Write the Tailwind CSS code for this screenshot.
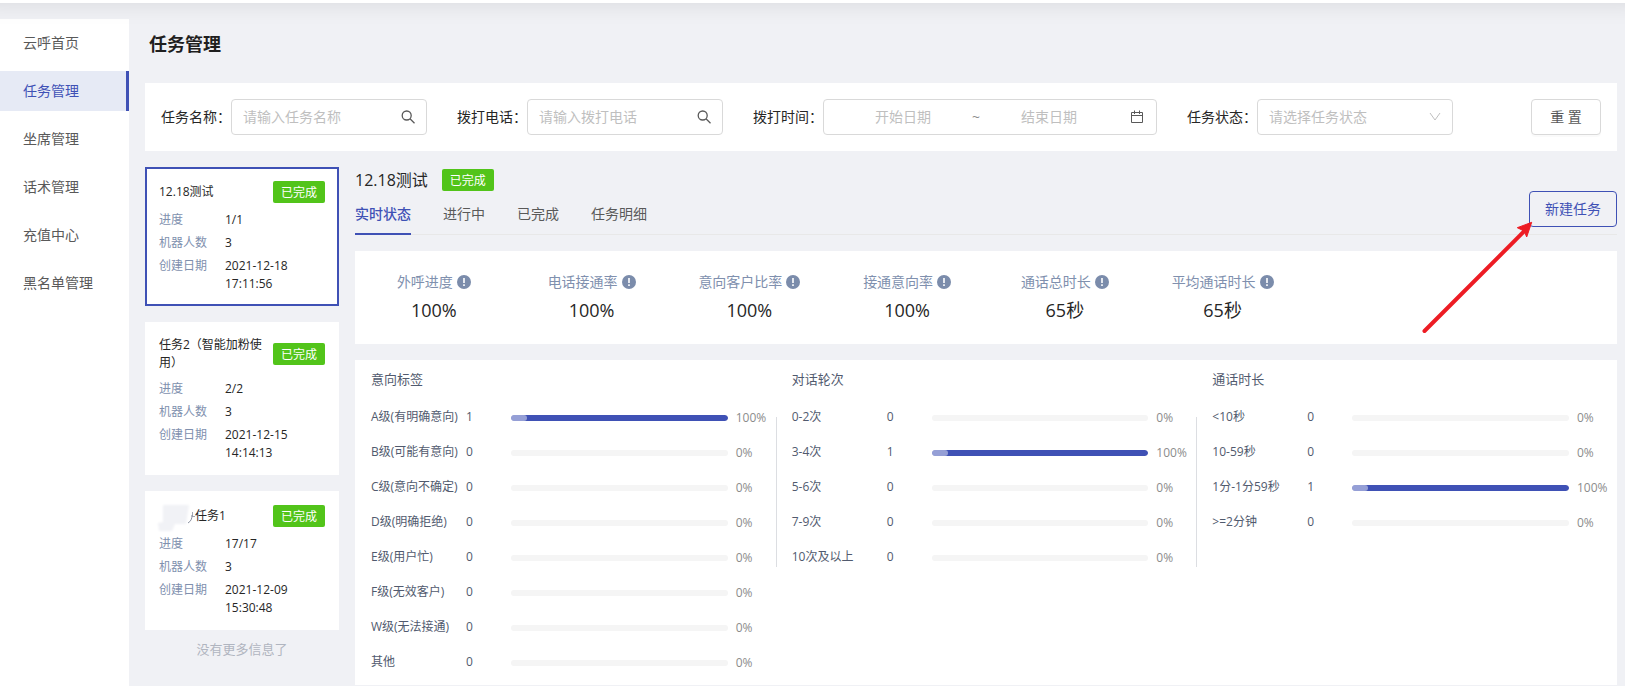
<!DOCTYPE html>
<html lang="zh-CN">
<head>
    <meta charset="UTF-8">
    <meta name="viewport" content="width=device-width, initial-scale=1.0">
    <title>任务管理</title>
    <script src="https://cdn.jsdelivr.net/npm/@tailwindcss/browser@4"></script>
</head>
<body class="min-h-screen flex flex-col bg-[#f0f1f5] font-['Open_Sans','Noto_Sans_CJK_SC',sans-serif] text-sm text-[#262626]">
    <header class="relative z-10 h-[3px] shrink-0 bg-white shadow-[0_-20px_24px_20px_rgba(0,0,0,0.11)]"></header>

    <div class="flex flex-1">
        <!-- Sidebar -->
        <nav class="mt-4 w-[129px] shrink-0 bg-white pt-1 text-[#595959]">
            <a href="#" class="mb-2 flex h-10 items-center pl-[23px]">云呼首页</a>
            <a href="#" class="mb-2 flex h-10 items-center border-r-3 border-[#3f51b5] bg-[#e6eaf5] pl-[23px] text-[#3f51b5]">任务管理</a>
            <a href="#" class="mb-2 flex h-10 items-center pl-[23px]">坐席管理</a>
            <a href="#" class="mb-2 flex h-10 items-center pl-[23px]">话术管理</a>
            <a href="#" class="mb-2 flex h-10 items-center pl-[23px]">充值中心</a>
            <a href="#" class="mb-2 flex h-10 items-center pl-[23px]">黑名单管理</a>
        </nav>

        <main class="min-w-0 flex-1 pl-4 pr-2">
            <h1 class="mt-[27px] mb-[25px] pl-1 text-lg leading-7 font-bold text-[#1f1f1f]">任务管理</h1>

            <!-- Filters -->
            <form class="mb-4 flex items-center gap-[30px] bg-white p-4">
                <div class="flex items-center">
                    <label for="taskName" class="w-[70px] whitespace-nowrap">任务名称：</label>
                    <div class="flex h-9 w-[196px] items-center rounded border border-[#d9d9d9] pr-[10px] pl-[11px]">
                        <input id="taskName" type="text" placeholder="请输入任务名称" class="min-w-0 flex-1 outline-none placeholder:text-[#bfbfbf]">
                        <svg class="size-4 text-[#595959]" viewBox="0 0 16 16" fill="none" stroke="currentColor" stroke-width="1.3"><circle cx="6.7" cy="6.5" r="4.5"/><path d="M10 9.8l4.5 4.5"/></svg>
                    </div>
                </div>
                <div class="flex items-center">
                    <label for="phone" class="w-[70px] whitespace-nowrap">拨打电话：</label>
                    <div class="flex h-9 w-[196px] items-center rounded border border-[#d9d9d9] pr-[10px] pl-[11px]">
                        <input id="phone" type="text" placeholder="请输入拨打电话" class="min-w-0 flex-1 outline-none placeholder:text-[#bfbfbf]">
                        <svg class="size-4 text-[#595959]" viewBox="0 0 16 16" fill="none" stroke="currentColor" stroke-width="1.3"><circle cx="6.7" cy="6.5" r="4.5"/><path d="M10 9.8l4.5 4.5"/></svg>
                    </div>
                </div>
                <div class="flex items-center">
                    <label for="startDate" class="w-[70px] whitespace-nowrap">拨打时间：</label>
                    <div class="flex h-9 w-[334px] items-center rounded border border-[#d9d9d9] pl-[10px] pr-3">
                        <input id="startDate" type="text" placeholder="开始日期" class="w-[138px] text-center outline-none placeholder:text-[#bfbfbf]">
                        <span class="w-2 text-center text-[#8c8c8c]">~</span>
                        <input id="endDate" type="text" placeholder="结束日期" aria-label="结束日期" class="w-[138px] text-center outline-none placeholder:text-[#bfbfbf]">
                        <svg class="ml-auto size-[14px] text-[#595959]" viewBox="0 0 14 14" fill="none" stroke="currentColor"><path d="M1.5 2.5h11v10h-11zM1.5 5.5h11M4.5 0.5v3.5M9.5 0.5v3.5"/></svg>
                    </div>
                </div>
                <div class="flex items-center">
                    <label for="status" class="w-[70px] whitespace-nowrap">任务状态：</label>
                    <div class="relative">
                        <select id="status" class="block h-9 w-[196px] appearance-none rounded border border-[#d9d9d9] px-[11px] text-[#bfbfbf] outline-none">
                            <option>请选择任务状态</option>
                            <option>进行中</option>
                            <option>已完成</option>
                        </select>
                        <svg class="pointer-events-none absolute top-3 right-3 size-3 text-[#bfbfbf]" viewBox="0 0 12 12" fill="none" stroke="currentColor"><path d="M1 2l5 7 5-7"/></svg>
                    </div>
                </div>
                <button type="reset" class="ml-auto h-9 w-[70px] rounded border border-[#d9d9d9] bg-white text-[#595959] shadow-[0_2px_0_rgba(0,0,0,0.02)]">重 置</button>
            </form>

            <div class="flex items-start gap-4">
                <!-- Task list -->
                <section class="w-[194px] shrink-0 text-xs leading-[18px]">
                    <article class="mb-4 border-2 border-[#3f51b5] bg-white px-3 pt-3 pb-[11px]">
                        <div class="mb-2 flex items-center justify-between">
                            <h2>12.18测试</h2>
                            <span class="h-[22px] w-[52px] shrink-0 rounded-xs bg-[#52c41a] text-center leading-[23px] text-white">已完成</span>
                        </div>
                        <dl class="grid grid-cols-[66px_1fr] gap-y-[5px]">
                            <dt class="text-[#8090ae]">进度</dt><dd>1/1</dd>
                            <dt class="text-[#8090ae]">机器人数</dt><dd>3</dd>
                            <dt class="text-[#8090ae]">创建日期</dt><dd>2021-12-18<br>17:11:56</dd>
                        </dl>
                    </article>

                    <article class="mb-4 border-2 border-white bg-white px-3 pt-3 pb-[11px]">
                        <div class="mb-2 flex items-center justify-between">
                            <h2 class="w-[104px]">任务2（智能加粉使用）</h2>
                            <span class="h-[22px] w-[52px] shrink-0 rounded-xs bg-[#52c41a] text-center leading-[23px] text-white">已完成</span>
                        </div>
                        <dl class="grid grid-cols-[66px_1fr] gap-y-[5px]">
                            <dt class="text-[#8090ae]">进度</dt><dd>2/2</dd>
                            <dt class="text-[#8090ae]">机器人数</dt><dd>3</dd>
                            <dt class="text-[#8090ae]">创建日期</dt><dd>2021-12-15<br>14:14:13</dd>
                        </dl>
                    </article>

                    <article class="border-2 border-white bg-white px-3 pt-3 pb-[11px]">
                        <div class="mb-2 flex items-center justify-between">
                            <h2 class="flex items-center">
                                <!-- masked part of the name -->
                                <svg class="h-[22px] w-9 overflow-visible" viewBox="0 0 36 22">
                                    <defs><filter id="soft" x="-20%" y="-20%" width="140%" height="140%"><feGaussianBlur stdDeviation="1"/></filter></defs>
                                    <path d="M33.5 7v5M33 11.500h3" stroke="#a3a8b3" fill="none"/>
                                    <path d="M33 10c0 4-1 6-4 8" stroke="#8a90a0" fill="none"/>
                                    <path d="M4 0h26l-3 19H16l-3 7H0l-1-8 5-1z" fill="#f1f2f6" filter="url(#soft)"/>
                                </svg>
                                任务1
                            </h2>
                            <span class="h-[22px] w-[52px] shrink-0 rounded-xs bg-[#52c41a] text-center leading-[23px] text-white">已完成</span>
                        </div>
                        <dl class="grid grid-cols-[66px_1fr] gap-y-[5px]">
                            <dt class="text-[#8090ae]">进度</dt><dd>17/17</dd>
                            <dt class="text-[#8090ae]">机器人数</dt><dd>3</dd>
                            <dt class="text-[#8090ae]">创建日期</dt><dd>2021-12-09<br>15:30:48</dd>
                        </dl>
                    </article>

                    <p class="mt-[9px] text-center text-[13px] leading-5 text-[#b0b5c0]">没有更多信息了</p>
                </section>

                <!-- Task detail -->
                <section class="min-w-0 flex-1 pt-[2px]">
                    <div class="flex items-center gap-[14px]">
                        <h2 class="text-base leading-[22px]">12.18测试</h2>
                        <span class="h-[22px] w-[52px] rounded-xs bg-[#52c41a] text-center text-xs leading-[23px] text-white">已完成</span>
                    </div>

                    <div class="mb-4 flex h-11 items-start justify-between border-b border-[#e8e8e8]">
                        <div role="tablist" class="flex gap-8 pt-3 leading-[22px] text-[#595959]">
                            <button role="tab" aria-selected="true" class="h-8 border-b-2 border-[#3f51b5] pb-2 font-medium text-[#3f51b5]">实时状态</button>
                            <button role="tab" class="h-8 border-b-2 border-transparent pb-2">进行中</button>
                            <button role="tab" class="h-8 border-b-2 border-transparent pb-2">已完成</button>
                            <button role="tab" class="h-8 border-b-2 border-transparent pb-2">任务明细</button>
                        </div>
                        <div class="relative">
                            <button class="h-9 w-[88px] rounded border border-[#3f51b5] text-[#3f51b5]">新建任务</button>
                            <svg class="pointer-events-none absolute top-[30px] -left-[108px] h-[114px] w-28" viewBox="0 0 112 114">
                                <path d="M3.5 110L104 9.500" stroke="#ed1c24" stroke-width="4" stroke-linecap="round"/>
                                <path d="M110.700 1.300L96.300 6.700l4.700 2.300 3 3 1.700 4z" fill="#ed1c24" stroke="#ed1c24" stroke-linejoin="round"/>
                            </svg>
                        </div>
                    </div>

                    <div id="stats" class="mb-4 grid grid-cols-8 bg-white pt-5 pb-5 text-center"></div>

                    <div id="charts" class="grid grid-cols-3 bg-white pt-[9px] pb-[6px] text-[#515a6e]"></div>
                </section>
            </div>
        </main>
    </div>

    <script>
        const stats = [
            ['外呼进度', '100%'],
            ['电话接通率', '100%'],
            ['意向客户比率', '100%'],
            ['接通意向率', '100%'],
            ['通话总时长', '65秒'],
            ['平均通话时长', '65秒']
        ];

        const charts = [
            { title: '意向标签', rows: [['A级(有明确意向)', 1, 100], ['B级(可能有意向)', 0, 0], ['C级(意向不确定)', 0, 0], ['D级(明确拒绝)', 0, 0], ['E级(用户忙)', 0, 0], ['F级(无效客户)', 0, 0], ['W级(无法接通)', 0, 0], ['其他', 0, 0]] },
            { title: '对话轮次', rows: [['0-2次', 0, 0], ['3-4次', 1, 100], ['5-6次', 0, 0], ['7-9次', 0, 0], ['10次及以上', 0, 0]] },
            { title: '通话时长', rows: [['&lt;10秒', 0, 0], ['10-59秒', 0, 0], ['1分-1分59秒', 1, 100], ['&gt;=2分钟', 0, 0]] }
        ];

        document.getElementById('stats').innerHTML = stats.map(([name, value]) => `
            <div>
                <div class="flex items-center justify-center gap-1 leading-[22px] whitespace-nowrap text-[#8090ae]">
                    ${name}
                    <svg class="size-[14px] shrink-0" viewBox="0 0 14 14"><circle cx="7" cy="7" r="7" fill="#7b8cab"/><path d="M6.200 3h1.600v5H6.200zM6.200 9.300h1.600v1.600H6.200z" fill="#fff"/></svg>
                </div>
                <div class="mt-[3px] text-lg leading-7">${value}</div>
            </div>`).join('');

        const bar = percent => percent
            ? `<div class="h-full rounded-full bg-[#3f51b5]" style="width: ${percent}%"><div class="h-full w-4 rounded-full bg-white/45"></div></div>`
            : '';

        document.getElementById('charts').innerHTML = charts.map((chart, i) => `
            <div>
                <h3 class="mb-[10px] pl-4 text-[13px] leading-5">${chart.title}</h3>
                <div class="flex items-start">
                    <div class="${i ? 'mt-[18px] h-[150px] w-px bg-[#dcdee2]' : 'w-px'}"></div>
                    <ul class="flex-1 pr-4 pl-[15px] text-xs">
                        ${chart.rows.map(([name, count, percent]) => `
                        <li class="flex h-[35px] items-center">
                            <span class="w-[95px] whitespace-nowrap">${name}</span>
                            <span class="w-[45px]">${count}</span>
                            <div class="flex flex-1 items-center gap-2 pt-[3px]">
                                <div class="h-[6px] flex-1 overflow-hidden rounded-full bg-[#f5f5f5]">${bar(percent)}</div>
                                <span class="w-6 whitespace-nowrap text-[#8c8c8c]">${percent}%</span>
                            </div>
                        </li>`).join('')}
                    </ul>
                </div>
            </div>`).join('');
    </script>
</body>
</html>
